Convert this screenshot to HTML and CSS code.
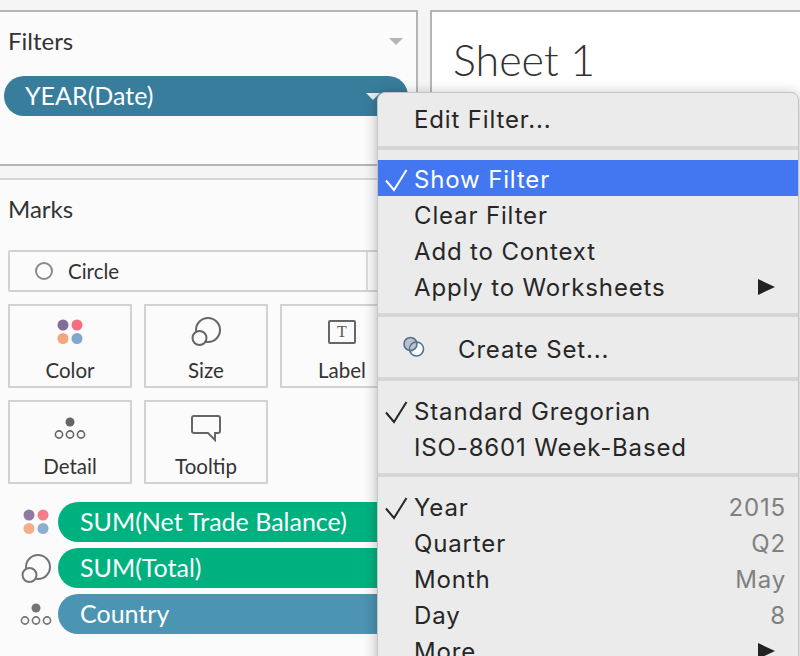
FILE: index.html
```html
<!DOCTYPE html>
<html lang="en">
<head>
  <meta charset="UTF-8" />
  <title>Sheet 1</title>
  <link rel="stylesheet" href="styles.css">
</head>
<body>
  <svg class="defs" width="0" height="0">
    <symbol id="iconColor" viewBox="0 0 28 28">
      <circle cx="7" cy="7" r="5.5" fill="#866d98"/>
      <circle cx="21" cy="7" r="5.5" fill="#f66f80"/>
      <circle cx="7" cy="20.5" r="5.5" fill="#f4a67c"/>
      <circle cx="21" cy="20.5" r="5.5" fill="#81a7cd"/>
    </symbol>
    <symbol id="iconSize" viewBox="0 0 30 30">
      <circle cx="17" cy="14" r="12" fill="none" stroke="#666" stroke-width="2"/>
      <circle cx="8.5" cy="22" r="7" fill="#fbfbfb" stroke="#666" stroke-width="2"/>
    </symbol>
    <symbol id="iconDetail" viewBox="0 0 32 28">
      <circle cx="16" cy="8" r="4.5" fill="#666"/>
      <circle cx="5" cy="20.5" r="3.6" fill="none" stroke="#666" stroke-width="1.6"/>
      <circle cx="16" cy="20.5" r="3.6" fill="none" stroke="#666" stroke-width="1.6"/>
      <circle cx="27" cy="20.5" r="3.6" fill="none" stroke="#666" stroke-width="1.6"/>
    </symbol>
    <symbol id="iconCheck" viewBox="0 0 24 24">
      <polyline points="1,12.5 9,22 21.5,2" fill="none" stroke="currentColor" stroke-width="2"/>
    </symbol>
  </svg>

  <div class="workspace">
    <div class="side">
      <section class="panel filters">
        <div class="panel-head">
          <span>Filters</span>
          <span class="caret"></span>
        </div>
        <div class="pill filter-pill">
          <span>YEAR(Date)</span>
          <span class="caret caret-white"></span>
        </div>
      </section>

      <section class="panel marks">
        <div class="panel-head"><span>Marks</span></div>

        <div class="mark-type">
          <span class="mark-circle"></span>
          <span>Circle</span>
          <span class="mark-split"></span>
        </div>

        <div class="cards">
          <div class="card">
            <svg class="card-icon" width="28" height="28"><use href="#iconColor"/></svg>
            <span>Color</span>
          </div>
          <div class="card">
            <svg class="card-icon" width="30" height="30"><use href="#iconSize"/></svg>
            <span>Size</span>
          </div>
          <div class="card">
            <span class="label-icon">T</span>
            <span>Label</span>
          </div>
          <div class="card">
            <svg class="card-icon" width="32" height="28"><use href="#iconDetail"/></svg>
            <span>Detail</span>
          </div>
          <div class="card">
            <svg class="card-icon" width="30" height="28" viewBox="0 0 30 28">
              <path d="M3 2H27Q29 2 29 4V17Q29 19 27 19H24V26L17 19H3Q1 19 1 17V4Q1 2 3 2Z" fill="none" stroke="#666" stroke-width="2"/>
            </svg>
            <span>Tooltip</span>
          </div>
        </div>

        <div class="shelf">
          <div class="shelf-row">
            <svg class="shelf-icon" width="28" height="28"><use href="#iconColor"/></svg>
            <div class="pill green">SUM(Net Trade Balance)</div>
          </div>
          <div class="shelf-row">
            <svg class="shelf-icon" width="30" height="30"><use href="#iconSize"/></svg>
            <div class="pill green">SUM(Total)</div>
          </div>
          <div class="shelf-row">
            <svg class="shelf-icon" width="32" height="28"><use href="#iconDetail"/></svg>
            <div class="pill blue">Country</div>
          </div>
        </div>
      </section>
    </div>

    <main class="sheet">
      <h1>Sheet 1</h1>
    </main>
  </div>

  <div class="menu">
    <div class="row row-first">Edit Filter...</div>
    <div class="sep"></div>
    <div class="row active">
      <svg class="check" width="24" height="24"><use href="#iconCheck"/></svg>
      <span>Show Filter</span>
    </div>
    <div class="row">Clear Filter</div>
    <div class="row">Add to Context</div>
    <div class="row">Apply to Worksheets<span class="arrow"></span></div>
    <div class="sep sep-before-set"></div>
    <div class="row row-set">
      <svg class="set-icon" width="24" height="22" viewBox="0 0 24 22">
        <circle cx="8.5" cy="8" r="6.5" fill="#b9c1cc"/>
        <circle cx="14.5" cy="13" r="6.5" fill="#fff"/>
        <path d="M14.5 6.5A6.5 6.5 0 0 0 8.5 13 6 6 0 0 0 10 17L15 8Z" fill="#b9c1cc"/>
        <circle cx="8.5" cy="8" r="6.5" fill="none" stroke="#54708f" stroke-width="1.6"/>
        <circle cx="14.5" cy="13" r="7" fill="none" stroke="#54708f" stroke-width="1.6"/>
      </svg>
      <span>Create Set...</span>
    </div>
    <div class="sep sep-after-set"></div>
    <div class="row">
      <svg class="check" width="24" height="24"><use href="#iconCheck"/></svg>
      <span>Standard Gregorian</span>
    </div>
    <div class="row">ISO-8601 Week-Based</div>
    <div class="sep sep-dates"></div>
    <div class="row">
      <svg class="check" width="24" height="24"><use href="#iconCheck"/></svg>
      <span>Year</span><span class="value">2015</span>
    </div>
    <div class="row">Quarter<span class="value">Q2</span></div>
    <div class="row">Month<span class="value">May</span></div>
    <div class="row">Day<span class="value">8</span></div>
    <div class="row">More<span class="arrow"></span></div>
  </div>
</body>
</html>
```

FILE: styles.css
```css
* { margin: 0; padding: 0; box-sizing: border-box; }
html, body { height: 656px; overflow: hidden; }
body {
  position: relative;
  background: #f5f5f5;
  font-family: "Lato", sans-serif;
  color: #333;
}
.defs { position: absolute; }

.workspace {
  display: flex;
  gap: 12px;
  padding-top: 10px;
  height: 656px;
}
.side { width: 418px; flex: none; }
.sheet {
  flex: 1;
  background: #fff;
  border-top: 2px solid #b5b5b5;
  border-left: 2px solid #b5b5b5;
  padding: 20px 0 0 21px;
}
.sheet h1 {
  font-size: 43px;
  font-weight: 300;
  line-height: 56px;
  color: #333;
}

.panel { background: #fbfbfb; padding-top: 14px; }
.filters {
  height: 156px;
  border-top: 2px solid #b5b5b5;
  border-bottom: 2px solid #b5b5b5;
  border-right: 2px solid #b5b5b5;
  padding-left: 4px;
}
.marks {
  margin-top: 12px;
  height: 478px;
  border-top: 2px solid #d6d6d6;
  padding-left: 8px;
}
.panel-head {
  display: flex;
  justify-content: space-between;
  align-items: center;
  height: 30px;
  font-size: 24px;
  line-height: 30px;
}
.filters .panel-head { padding: 0 13px 0 4px; }

.caret {
  width: 0;
  height: 0;
  border-left: 7px solid transparent;
  border-right: 7px solid transparent;
  border-top: 7px solid #b5b5b5;
}
.caret-white { border-top-color: #e6eef2; margin-top: 3px; }

.pill {
  display: flex;
  justify-content: space-between;
  align-items: center;
  height: 40px;
  border-radius: 20px;
  padding-left: 21px;
  padding-bottom: 3px;
  font-size: 25px;
  color: #fff;
}
.filter-pill {
  width: 404px;
  margin-top: 20px;
  padding-right: 28px;
  padding-bottom: 2px;
  background: #387d9c;
}
.green { background: #00b180; flex: 1; }
.blue { background: #4b94b2; flex: 1; }

.mark-type {
  display: flex;
  align-items: center;
  height: 42px;
  width: 396px;
  margin-top: 26px;
  padding-left: 25px;
  border: 2px solid #d2d2d2;
  border-radius: 2px;
  font-size: 20.5px;
  position: relative;
}
.mark-circle {
  width: 18px;
  height: 18px;
  border: 2px solid #8a8a8a;
  border-radius: 50%;
  margin-right: 15px;
}
.mark-split {
  position: absolute;
  left: 356px;
  top: 0;
  bottom: 0;
  border-left: 2px solid #dcdcdc;
}

.cards {
  display: grid;
  grid-template-columns: repeat(3, 124px);
  grid-auto-rows: 84px;
  gap: 12px;
  margin-top: 12px;
}
.card {
  display: flex;
  flex-direction: column;
  align-items: center;
  justify-content: flex-end;
  border: 2px solid #d2d2d2;
  font-size: 20.5px;
  line-height: 30px;
  padding-bottom: 1px;
}
.card-icon { margin-bottom: 9px; }
.label-icon {
  display: flex;
  align-items: center;
  justify-content: center;
  width: 28px;
  height: 24px;
  margin-bottom: 11px;
  border: 2px solid #666;
  border-radius: 2px;
  font-family: "Liberation Serif", serif;
  font-size: 16px;
  color: #555;
}

.shelf {
  display: flex;
  flex-direction: column;
  gap: 6px;
  margin-top: 18px;
  width: 396px;
}
.shelf-row { display: flex; align-items: center; }
.shelf-row .shelf-icon { flex: none; opacity: 0.9; }
.shelf-row:nth-child(1) .shelf-icon { margin: 0 8px 0 14px; }
.shelf-row:nth-child(2) .shelf-icon { margin: 0 7px 0 13px; }
.shelf-row:nth-child(3) .shelf-icon { margin: 0 6px 0 12px; }
.shelf .pill { padding-left: 22px; }

.menu {
  position: absolute;
  left: 377px;
  top: 92px;
  width: 422px;
  height: 600px;
  padding-top: 8px;
  background: #ebebeb;
  border: 1px solid #c4c4c4;
  border-radius: 8px;
  box-shadow: 0 2px 14px rgba(0, 0, 0, 0.28);
  font-family: "Inter", sans-serif;
  font-size: 24px;
  letter-spacing: 0.85px;
  color: #262626;
}
.row {
  display: flex;
  align-items: center;
  height: 36px;
  padding: 2px 12px 0 36px;
  position: relative;
  white-space: nowrap;
}
.row-first { padding-top: 0; }
.row.active { background: #4277f1; color: #fff; }
.sep {
  height: 4px;
  margin: 9px 0 10px;
  background: #d6d6d6;
}
.sep-before-set { margin-bottom: 0; }
.sep-after-set { margin: 0 0 11px; }
.sep-dates { margin-bottom: 11px; }
.row-set { height: 60px; padding: 4px 12px 0 80px; }
.check { position: absolute; left: 7px; top: 8px; color: #262626; }
.active .check { color: #fff; }
.set-icon { position: absolute; left: 24px; top: 19px; }
.value { margin-left: auto; color: #808080; }
.arrow {
  margin: 0 11px 0 auto;
  width: 0;
  height: 0;
  border-left: 17px solid #222;
  border-top: 8px solid transparent;
  border-bottom: 8px solid transparent;
}
```
